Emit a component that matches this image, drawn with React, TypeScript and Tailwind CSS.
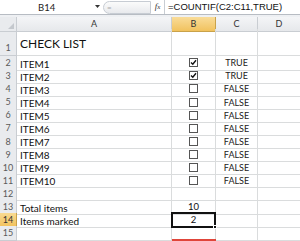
import React from "react";

const rowH = "h-[13.1px]";

const items = [
  { n: 2, a: "ITEM1", checked: true },
  { n: 3, a: "ITEM2", checked: true },
  { n: 4, a: "ITEM3", checked: false },
  { n: 5, a: "ITEM4", checked: false },
  { n: 6, a: "ITEM5", checked: false },
  { n: 7, a: "ITEM6", checked: false },
  { n: 8, a: "ITEM7", checked: false },
  { n: 9, a: "ITEM8", checked: false },
  { n: 10, a: "ITEM9", checked: false },
  { n: 11, a: "ITEM10", checked: false },
];

function Box({ checked }: { checked: boolean }) {
  return (
    <div className="w-[9px] h-[9px] border border-[#555] bg-white flex items-center justify-center">
      {checked && (
        <svg width="7" height="7" viewBox="0 0 7 7">
          <path d="M1 3.5 L2.8 5.3 L6 1.3" stroke="#111" strokeWidth="1.4" fill="none" />
        </svg>
      )}
    </div>
  );
}

function RowHead({ n, active, tall }: { n: number; active?: boolean; tall?: boolean }) {
  return (
    <div
      className={
        "flex justify-center text-[9px] border-r border-b " +
        (tall ? "items-end pb-[1px] " : "items-center ") +
        (active
          ? "bg-gradient-to-b from-[#f8da92] to-[#f1c15a] text-[#333] border-[#c9a24a]"
          : "bg-[#e9ebee] text-[#5a5a5a] border-[#c9cdd2]")
      }
    >
      {n}
    </div>
  );
}

function Row({
  n,
  a,
  b,
  c,
  tall,
  active,
  bActive,
}: {
  n: number;
  a?: React.ReactNode;
  b?: React.ReactNode;
  c?: React.ReactNode;
  tall?: boolean;
  active?: boolean;
  bActive?: boolean;
}) {
  return (
    <div className={"grid grid-cols-[17px_155px_44px_42px_42px] " + (tall ? "h-[27px]" : rowH)}>
      <RowHead n={n} active={active} tall={tall} />
      <div className="border-r border-b border-[#dadcdd] flex items-end pl-[3px] pb-[1px] overflow-visible whitespace-nowrap">
        {a}
      </div>
      <div
        className={
          "flex items-center justify-center " +
          (bActive
            ? "border-2 border-[#111] relative -ml-[1px] -mt-[1px]"
            : "border-r border-b border-[#dadcdd]")
        }
      >
        {b}
        {bActive && <div className="absolute -right-[3px] -bottom-[3px] w-[4px] h-[4px] bg-[#111] border border-white" />}
      </div>
      <div className="border-r border-b border-[#dadcdd] flex items-center justify-center">{c}</div>
      <div className="border-b border-[#dadcdd]" />
    </div>
  );
}

export default function App() {
  return (
    <div
      className="w-[300px] h-[241px] overflow-hidden bg-white text-[#111]"
      style={{ fontFamily: "Lato, 'Open Sans', sans-serif" }}
    >
      {/* formula bar */}
      <div className="h-[15px] flex items-center border-b border-[#b7bcc3] bg-white">
        <div className="w-[103px] h-full flex items-center relative">
          <span className="absolute left-[38px] text-[9.5px] text-[#222] top-[1px]">B14</span>
          <svg className="absolute left-[95px] top-[5px]" width="5" height="4" viewBox="0 0 5 4">
            <path d="M0 0 L5 0 L2.5 3 Z" fill="#333" />
          </svg>
        </div>
        <div className="w-[48px] h-[13px] rounded-l-full border border-[#c7ccd3] bg-gradient-to-b from-[#fbfbfb] to-[#e8eaed] flex items-center pl-[3px]">
          <span className="text-[8px] text-[#aaa]">=</span>
        </div>
        <div className="w-[13px] h-full flex items-center justify-center text-[9px] italic text-[#333]" style={{ fontFamily: "'Liberation Serif', serif" }}>
          f<span className="text-[7px]">x</span>
        </div>
        <div className="w-[1px] h-full bg-[#c8cdd3]" />
        <span className="ml-[3px] text-[9.5px] text-[#111] whitespace-nowrap" style={{ fontFamily: "'Liberation Sans', sans-serif" }}>
          =COUNTIF(C2:C11,TRUE)
        </span>
      </div>
      <div className="h-[2px] bg-[#eef0f3]" />
      {/* column header */}
      <div className="grid grid-cols-[17px_155px_44px_42px_42px] h-[12px] text-[9px] text-[#333]">
        <div className="bg-[#e9ebee] border-r border-b border-[#c9cdd2] relative">
          <svg className="absolute right-[2px] bottom-[2px]" width="6" height="6" viewBox="0 0 6 6">
            <path d="M6 0 L6 6 L0 6 Z" fill="#c4c8cd" />
          </svg>
        </div>
        <div className="bg-gradient-to-b from-[#f4f5f7] to-[#e6e8eb] border-r border-b border-[#c9cdd2] flex items-center justify-center">A</div>
        <div className="bg-gradient-to-b from-[#f9dc98] to-[#f1c25d] border-r border-b border-[#c9a24a] flex items-center justify-center">B</div>
        <div className="bg-gradient-to-b from-[#f4f5f7] to-[#e6e8eb] border-r border-b border-[#c9cdd2] flex items-center justify-center">C</div>
        <div className="bg-gradient-to-b from-[#f4f5f7] to-[#e6e8eb] border-b border-[#c9cdd2] flex items-center justify-center">D</div>
      </div>
      <Row n={1} tall a={<span className="text-[12px] leading-none pb-[4px]">CHECK LIST</span>} />
      {items.map((it) => (
        <Row
          key={it.n}
          n={it.n}
          a={<span className="text-[10px] leading-none">{it.a}</span>}
          b={<Box checked={it.checked} />}
          c={<span className="text-[9px] leading-none text-[#222]">{it.checked ? "TRUE" : "FALSE"}</span>}
        />
      ))}
      <Row n={12} />
      <Row n={13} a={<span className="text-[10px] leading-none">Total items</span>} b={<span className="text-[9.5px] leading-none">10</span>} />
      <Row n={14} active bActive a={<span className="text-[10px] leading-none">Items marked</span>} b={<span className="text-[9.5px] leading-none">2</span>} />
      <Row n={15} />
      <div className="grid grid-cols-[17px_155px_44px_42px_42px] h-[2px]">
        <div />
        <div />
        <div className="bg-[#e0453a]" />
      </div>
    </div>
  );
}
